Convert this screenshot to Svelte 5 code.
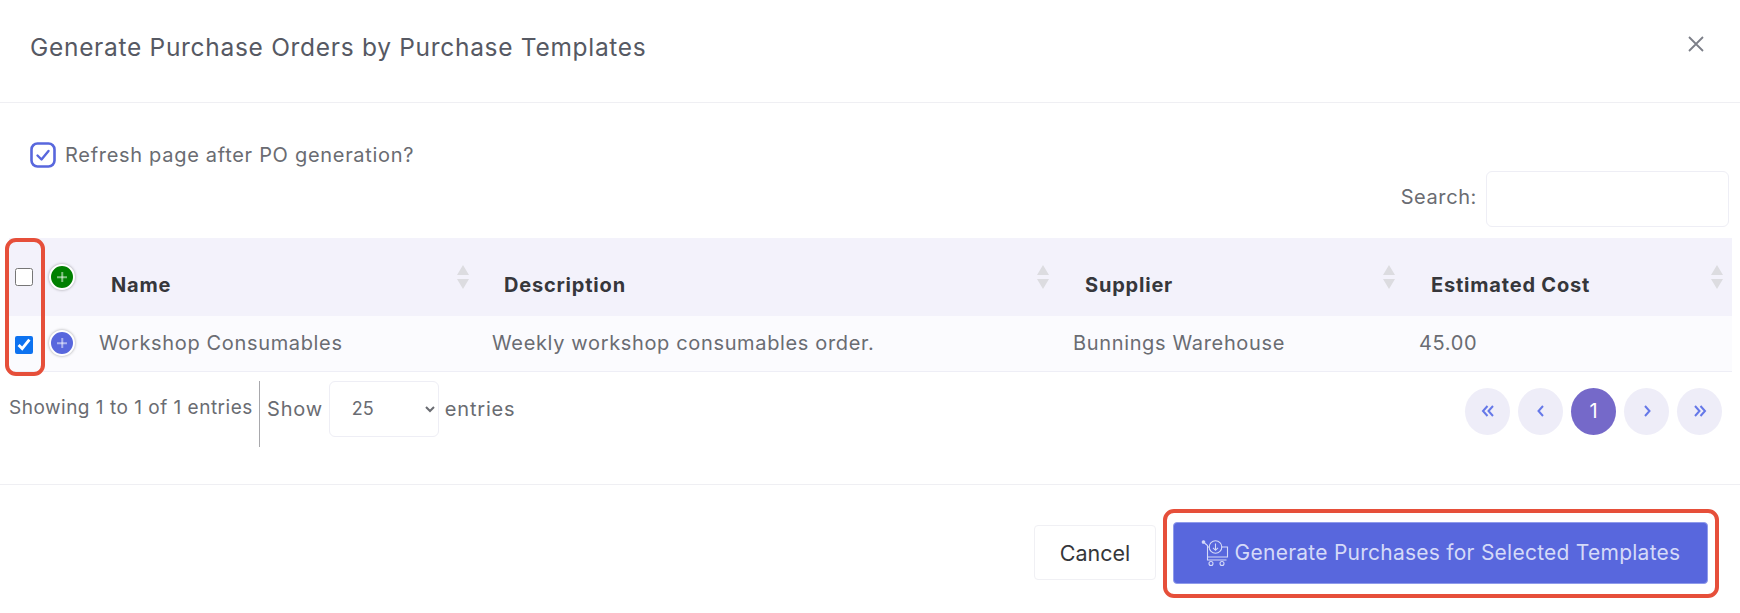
<script>
  const columns = ['Name', 'Description', 'Supplier', 'Estimated Cost'];
  const row = ['Workshop Consumables', 'Weekly workshop consumables order.', 'Bunnings Warehouse', '45.00'];
</script>

<section class="modal">
  <header class="modal-header">
    <h2 class="title">Generate Purchase Orders by Purchase Templates</h2>
    <button class="close" aria-label="Close">
      <svg width="18" height="18" viewBox="0 0 18 18"><path d="M2 2l14 14M16 2L2 16" stroke="#7c7f88" stroke-width="1.8" fill="none"/></svg>
    </button>
  </header>

  <div class="modal-body">
    <label class="refresh">
      <svg class="refresh-box" width="26" height="26" viewBox="0 0 26 26">
        <rect x="1.5" y="1.5" width="23" height="23" rx="6" fill="#fff" stroke="#5867dd" stroke-width="2.6"/>
        <path d="M7.5 13.5l4 4 7-8.5" fill="none" stroke="#5867dd" stroke-width="2.4" stroke-linecap="round" stroke-linejoin="round"/>
      </svg>
      Refresh page after PO generation?
    </label>

    <div class="search">
      <span>Search:</span>
      <input type="text" />
    </div>

    <table>
      <colgroup>
        <col class="c-check" /><col class="c-plus" /><col class="c-name" /><col class="c-desc" /><col class="c-supplier" /><col class="c-cost" />
      </colgroup>
      <thead>
        <tr>
          <th class="cell-check"><input type="checkbox" /></th>
          <th class="cell-plus"><span class="plus green"></span></th>
          {#each columns as col}
            <th class="sortable">
              {col}
              <svg class="sort" width="14" height="24" viewBox="0 0 14 24"><path d="M7 0l6 10H1zM7 24l6-10H1z" fill="#dcdce0"/></svg>
            </th>
          {/each}
        </tr>
      </thead>
      <tbody>
        <tr>
          <td class="cell-check"><input type="checkbox" checked /></td>
          <td class="cell-plus"><span class="plus blue"></span></td>
          {#each row as value}
            <td>{value}</td>
          {/each}
        </tr>
      </tbody>
    </table>

    <div class="table-footer">
      <span class="info">Showing 1 to 1 of 1 entries</span>
      <div class="length">
        <span>Show</span>
        <select><option>25</option></select>
        <span>entries</span>
      </div>
      <nav class="pager">
        <button aria-label="First"><svg width="14" height="14" viewBox="0 0 14 14"><path d="M6.5 2L2 7l4.500 5M12 2L7.500 7l4.500 5"/></svg></button>
        <button aria-label="Previous"><svg width="14" height="14" viewBox="0 0 14 14"><path d="M9 2L4.500 7 9 12"/></svg></button>
        <button class="active">1</button>
        <button aria-label="Next"><svg width="14" height="14" viewBox="0 0 14 14"><path d="M5 2l4.500 5L5 12"/></svg></button>
        <button aria-label="Last"><svg width="14" height="14" viewBox="0 0 14 14"><path d="M2 2l4.500 5L2 12M7.500 2L12 7l-4.500 5"/></svg></button>
      </nav>
    </div>
  </div>

  <footer class="modal-footer">
    <button class="cancel">Cancel</button>
    <button class="generate">
      <svg width="28" height="28" viewBox="0 0 28 28" fill="none" stroke="#d5daf8" stroke-width="1.1">
        <circle cx="2.500" cy="3" r="1.300" fill="#d5daf8"/>
        <path d="M3.500 4l3 2.500V21h19M6.500 8H9M20 8h6.500v10H6.500"/>
        <circle cx="14.500" cy="8" r="6.300"/>
        <path d="M14.500 4.500v6.500M12 8.800l2.500 2.500 2.500-2.500"/>
        <circle cx="10" cy="24.500" r="2"/>
        <circle cx="21" cy="24.500" r="2"/>
      </svg>
      Generate Purchases for Selected Templates
    </button>
  </footer>

  <div class="mark mark-checks"></div>
  <div class="mark mark-generate"></div>
</section>

<style>
  :global(body) {
    margin: 0;
    background: #fff;
  }

  .modal {
    position: relative;
    width: 1740px;
    height: 613px;
    overflow: hidden;
    font-family: Inter, "Noto Sans", sans-serif;
    color: #6a6c72;
  }

  .modal-header {
    height: 103px;
    box-sizing: border-box;
    border-bottom: 1px solid #efeff3;
    display: flex;
    align-items: center;
    justify-content: space-between;
    padding: 0 35px 14px 30px;
  }

  .title {
    margin: 6px 0 0;
    font-size: 24.500px;
    font-weight: 400;
    color: #565963;
    letter-spacing: 0.7px;
    white-space: nowrap;
  }

  .close {
    border: none;
    background: none;
    padding: 0;
    display: flex;
  }

  .modal-body {
    padding: 39px 8px 0 9px;
  }

  .refresh {
    display: flex;
    align-items: center;
    gap: 9px;
    height: 26px;
    margin-left: 21px;
    font-size: 20px;
    letter-spacing: 0.7px;
  }

  .refresh-box {
    flex: none;
  }

  .search {
    display: flex;
    justify-content: flex-end;
    align-items: center;
    gap: 9px;
    margin: 3px 3px 11px 0;
    font-size: 20px;
    letter-spacing: 0.6px;
  }

  .search span {
    padding-bottom: 4px;
  }

  .search input {
    width: 243px;
    height: 56px;
    box-sizing: border-box;
    border: 1px solid #eeeef5;
    border-radius: 6px;
    outline: none;
  }

  table {
    width: 1723px;
    table-layout: fixed;
    border-collapse: collapse;
    font-size: 20px;
    letter-spacing: 0.65px;
  }

  .c-check { width: 33px; }
  .c-plus { width: 45px; }
  .c-name { width: 393px; }
  .c-desc { width: 581px; }
  .c-supplier { width: 346px; }

  thead tr {
    height: 78px;
    background: #f3f2fb;
  }

  tbody tr {
    height: 55px;
    background: #fbfbfe;
    border-bottom: 1px solid #eeeef6;
  }

  th {
    position: relative;
    padding: 16px 0 0 24px;
    text-align: left;
    font-weight: 700;
    font-size: 20px;
    letter-spacing: 0.8px;
    color: #36373b;
  }

  td {
    padding: 0 0 0 12px;
    white-space: nowrap;
  }

  th.cell-check, td.cell-check {
    padding: 0 0 0 6px;
    vertical-align: middle;
  }

  th.cell-check, th.cell-plus {
    padding-top: 0;
    padding-bottom: 0;
  }

  th.cell-check input {
    margin: 0;
  }

  td.cell-check input {
    margin: 4px 0 0;
  }

  .cell-check input {
    display: block;
    width: 18px;
    height: 18px;
    accent-color: #0d72f0;
  }

  th.cell-plus, td.cell-plus {
    padding: 0 0 0 7px;
  }

  .plus {
    display: block;
    position: relative;
    width: 22px;
    height: 22px;
    border-radius: 50%;
    border: 2px solid #fff;
    box-shadow: 0 0 3px rgba(0, 0, 0, 0.35);
  }

  .plus::before, .plus::after {
    content: "";
    position: absolute;
    background: rgba(255, 255, 255, 0.5);
    left: 50%;
    top: 50%;
    transform: translate(-50%, -50%);
  }

  .plus::before { width: 10px; height: 1.500px; }
  .plus::after { width: 1.500px; height: 10px; }

  .green { background: #008000; }
  .blue { background: #5867dd; }

  .sort {
    position: absolute;
    right: 11px;
    top: 27px;
  }

  .sortable:nth-child(3) .sort { right: 10px; }
  .sortable:last-child .sort { right: 8px; }

  .table-footer {
    display: flex;
    align-items: flex-start;
    margin-top: 9px;
    height: 103px;
    font-size: 20px;
    letter-spacing: 0.6px;
  }

  .info {
    width: 251px;
    height: 66px;
    box-sizing: border-box;
    padding-top: 15px;
    border-right: 1px solid #a8a8ac;
    font-size: 19px;
    letter-spacing: 0.5px;
    white-space: nowrap;
  }

  .length {
    display: flex;
    align-items: center;
    gap: 6px;
    margin-left: 7px;
    letter-spacing: 0.8px;
  }

  select {
    width: 110px;
    height: 56px;
    padding-left: 18px;
    padding-right: 4px;
    border: 1px solid #eeeef5;
    border-radius: 6px;
    background: #fff;
    color: #6a6c72;
    font: inherit;
    font-size: 18px;
    outline: none;
  }

  .pager {
    margin-left: auto;
    margin-top: 7px;
    margin-right: 10px;
    display: flex;
    gap: 8px;
  }

  .pager button {
    width: 45px;
    height: 47px;
    padding: 0;
    border: none;
    border-radius: 50%;
    background: #eeedf8;
    display: flex;
    align-items: center;
    justify-content: center;
    color: #fff;
    font: inherit;
  }

  .pager button.active {
    background: #7569c9;
  }

  .pager path {
    fill: none;
    stroke: #6578e8;
    stroke-width: 2;
  }

  .modal-footer {
    border-top: 1px solid #efeff3;
    display: flex;
    justify-content: flex-end;
    align-items: center;
    gap: 17px;
    padding: 37px 32px 0 0;
  }

  .modal-footer button {
    font-family: inherit;
  }

  .cancel {
    width: 122px;
    height: 55px;
    border: 1px solid #f0f0f4;
    border-radius: 4px;
    background: #fff;
    color: #35363a;
    font-size: 21.500px;
  }

  .generate {
    width: 535px;
    height: 62px;
    border: 1px solid #8f9beb;
    border-radius: 4px;
    background: #5867dd;
    color: #d5daf8;
    display: flex;
    align-items: center;
    justify-content: center;
    gap: 6px;
    padding: 0;
    white-space: nowrap;
    font-size: 21px;
    letter-spacing: 0.25px;
  }

  .mark {
    position: absolute;
    box-sizing: border-box;
    border: 4px solid #e64f3a;
    border-radius: 11px;
    pointer-events: none;
  }

  .mark-checks {
    left: 5px;
    top: 238px;
    width: 40px;
    height: 138px;
  }

  .mark-generate {
    left: 1163px;
    top: 509px;
    width: 556px;
    height: 89px;
  }
</style>
